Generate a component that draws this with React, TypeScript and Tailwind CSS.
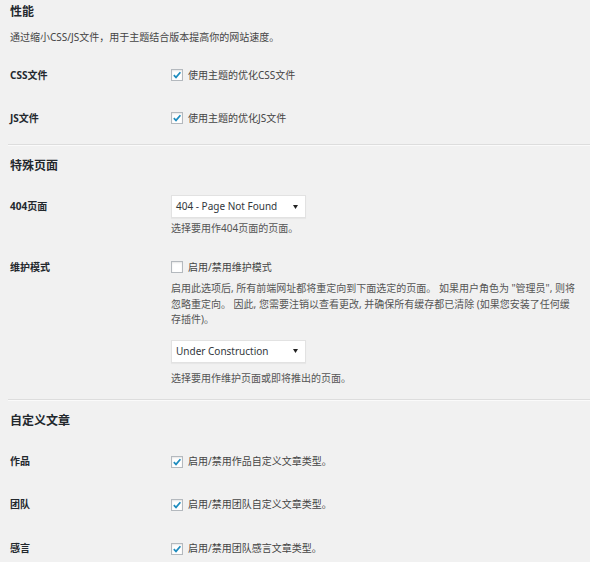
import React from "react";

const Check = ({ checked }: { checked?: boolean }) => (
    <span className="flex h-[12px] w-[12px] shrink-0 items-center justify-center border border-[#b4b9be] bg-white shadow-[inset_0_1px_2px_rgba(0,0,0,0.1)]">
        {checked ? (
            <svg width="10" height="10" viewBox="0 0 10 10">
                <path
                    d="M1.8 5.2 L4 7.4 L8.4 2.2"
                    fill="none"
                    stroke="#1e8cbe"
                    strokeWidth="1.7"
                />
            </svg>
        ) : null}
    </span>
);

const Select = ({ value }: { value: string }) => (
    <div className="flex h-[23px] w-[135px] items-center justify-between border border-[#e2e2e2] bg-white pl-[4px] pr-[7px] text-[10px] text-[#32373c] shadow-[0_1px_1px_rgba(0,0,0,0.04)]">
        <span>{value}</span>
        <svg width="5" height="4" viewBox="0 0 5 4">
            <path d="M0 0 H5 L2.5 4 Z" fill="#222" />
        </svg>
    </div>
);

const Heading = ({ children, className }: { children: React.ReactNode; className: string }) => (
    <h2 className={"text-[12px] font-bold leading-[20px] text-[#23282d] " + className}>{children}</h2>
);

const CheckRow = ({ label, text, checked, className }: { label: string; text: string; checked?: boolean; className: string }) => (
    <div className={"grid grid-cols-[161px_1fr] items-center h-[22px] " + className}>
        <span className="text-[10px] font-bold text-[#23282d]">{label}</span>
        <label className="flex items-center gap-[5px] text-[10px] text-[#444]">
            <Check checked={checked} />
            <span>{text}</span>
        </label>
    </div>
);

const Divider = ({ className }: { className: string }) => (
    <div className={"-ml-[2px] border-t border-b border-t-[#dddddd] border-b-[#fafafa] " + className} />
);

export default function App() {
    return (
        <div className="min-h-[562px] w-full overflow-hidden bg-[#f1f1f1] pl-[10px] font-['Noto_Sans','Noto_Sans_CJK_SC',sans-serif]">
            <Heading className="pt-[2px]">性能</Heading>
            <p className="mt-[6px] text-[10px] leading-[18px] text-[#444]">
                通过缩小CSS/JS文件，用于主题结合版本提高你的网站速度。
            </p>
            <CheckRow className="mt-[18px]" label="CSS文件" text="使用主题的优化CSS文件" checked />
            <CheckRow className="mt-[21px]" label="JS文件" text="使用主题的优化JS文件" checked />
            <Divider className="mt-[15px]" />

            <Heading className="mt-[10px]">特殊页面</Heading>
            <div className="mt-[19px] grid grid-cols-[161px_1fr]">
                <span className="text-[10px] font-bold leading-[23px] text-[#23282d]">404页面</span>
                <div>
                    <Select value="404 - Page Not Found" />
                    <p className="mt-[1px] text-[10px] leading-[18px] text-[#555]">选择要用作404页面的页面。</p>
                </div>
            </div>
            <div className="mt-[19px] grid grid-cols-[161px_1fr]">
                <span className="text-[10px] font-bold leading-[22px] text-[#23282d]">维护模式</span>
                <div className="pr-[14px]">
                    <label className="flex h-[22px] items-center gap-[5px] text-[10px] text-[#444]">
                        <Check />
                        <span>启用/禁用维护模式</span>
                    </label>
                    <p className="mt-[3px] text-[10px] leading-[15.5px] text-[#555]">
                        启用此选项后, 所有前端网址都将重定向到下面选定的页面。 如果用户角色为 "管理员", 则将忽略重定向。 因此, 您需要注销以查看更改, 并确保所有缓存都已清除 (如果您安装了任何缓存插件)。
                    </p>
                    <div className="mt-[12px]">
                        <Select value="Under Construction" />
                    </div>
                    <p className="mt-[6px] text-[10px] leading-[18px] text-[#555]">选择要用作维护页面或即将推出的页面。</p>
                </div>
            </div>
            <Divider className="mt-[12px]" />

            <Heading className="mt-[10px]">自定义文章</Heading>
            <CheckRow className="mt-[20px]" label="作品" text="启用/禁用作品自定义文章类型。" checked />
            <CheckRow className="mt-[21px]" label="团队" text="启用/禁用团队自定义文章类型。" checked />
            <CheckRow className="mt-[22px]" label="感言" text="启用/禁用团队感言文章类型。" checked />
        </div>
    );
}
